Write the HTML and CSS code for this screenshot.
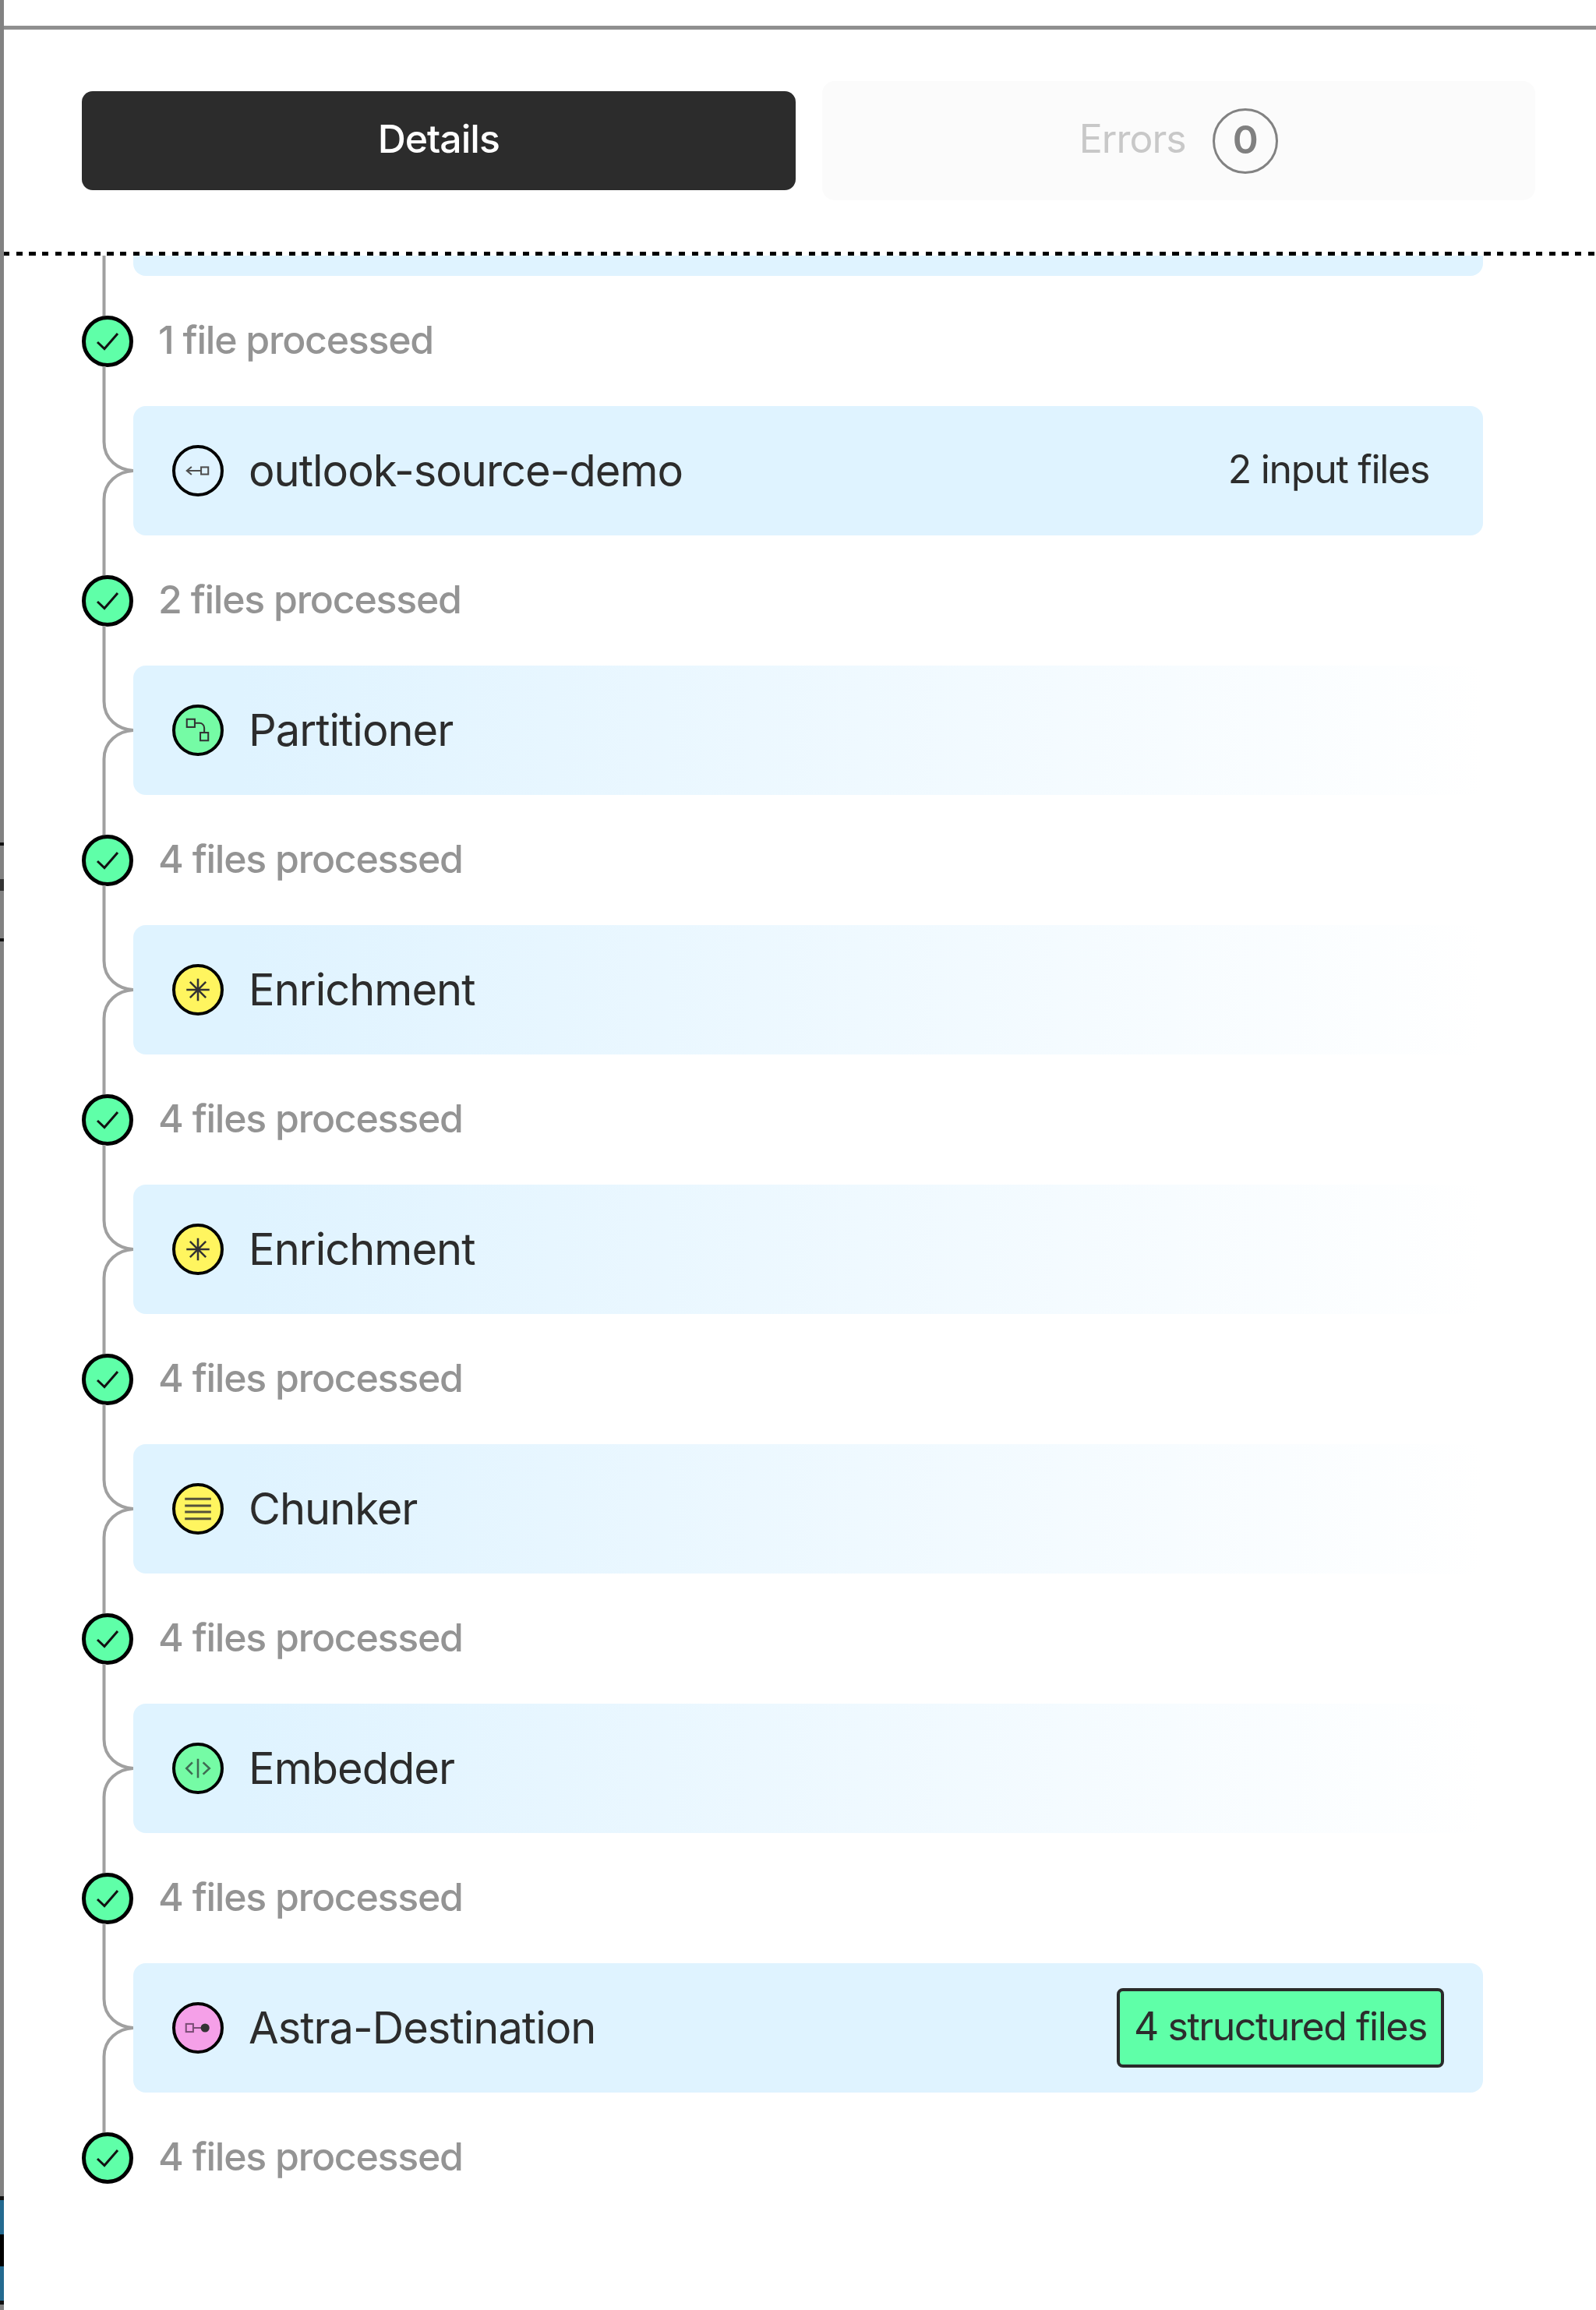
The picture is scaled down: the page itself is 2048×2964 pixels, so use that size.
FILE: index.html
```html
<!DOCTYPE html>
<html lang="en">
<head>
    <meta charset="UTF-8">
    <meta name="viewport" content="width=device-width, initial-scale=1.0">
    <title>Job Details</title>
    <link rel="stylesheet" href="styles.css">
</head>
<body>
    <div class="window-edge"></div>

    <svg class="defs" width="0" height="0">
        <symbol id="connector" viewBox="0 0 44 268">
            <path d="M6.5 0V97C6.5 120 25 133 44 134C25 135 6.5 148 6.5 171V268" fill="none" stroke="#a0a0a0" stroke-width="4"/>
        </symbol>
        <symbol id="check" viewBox="1 1 56 56">
            <path d="M16 30L25 38.5L42 19" fill="none" stroke="#111" stroke-width="3"/>
        </symbol>
    </svg>

    <header class="top-bar"></header>

    <div class="tabs">
        <div class="tab tab-active"><span class="tab-label">Details</span></div>
        <div class="tab tab-disabled">
            <span class="tab-label">Errors</span>
            <span class="count">0</span>
        </div>
    </div>

    <div class="divider"></div>

    <div class="timeline">
        <div class="card-row">
            <svg class="connector"><use href="#connector"/></svg>
            <div class="card card-solid"></div>
        </div>

        <div class="step">
            <span class="step-dot"><svg><use href="#check"/></svg></span>
            <span class="step-label">1 file processed</span>
        </div>

        <div class="card-row">
            <svg class="connector"><use href="#connector"/></svg>
            <div class="card card-solid">
                <span class="node-icon">
                    <svg viewBox="0.5 0.5 57 57" fill="none" stroke="#4d4d4d" stroke-width="2">
                        <path d="M15 29H33M21 24L15 29L21 34"/>
                        <rect x="33" y="24.5" width="9" height="9"/>
                    </svg>
                </span>
                <span class="card-name">outlook-source-demo</span>
                <span class="card-note">2 input files</span>
            </div>
        </div>

        <div class="step">
            <span class="step-dot"><svg><use href="#check"/></svg></span>
            <span class="step-label">2 files processed</span>
        </div>

        <div class="card-row">
            <svg class="connector"><use href="#connector"/></svg>
            <div class="card">
                <span class="node-icon icon-green">
                    <svg viewBox="0.5 0.5 57 57" fill="none" stroke="#333" stroke-width="2">
                        <rect x="15" y="15" width="10" height="10"/>
                        <rect x="32" y="32" width="10" height="10"/>
                        <path d="M25 20H31A6 6 0 0 1 37 26V32"/>
                    </svg>
                </span>
                <span class="card-name">Partitioner</span>
            </div>
        </div>

        <div class="step">
            <span class="step-dot"><svg><use href="#check"/></svg></span>
            <span class="step-label">4 files processed</span>
        </div>

        <div class="card-row">
            <svg class="connector"><use href="#connector"/></svg>
            <div class="card">
                <span class="node-icon icon-yellow">
                    <svg viewBox="0.5 0.5 57 57" fill="none" stroke="#333" stroke-width="2.5">
                        <path d="M14.5 29H43.5M29 15V43M19 19L39 39M39 19L19 39"/>
                    </svg>
                </span>
                <span class="card-name">Enrichment</span>
            </div>
        </div>

        <div class="step">
            <span class="step-dot"><svg><use href="#check"/></svg></span>
            <span class="step-label">4 files processed</span>
        </div>

        <div class="card-row">
            <svg class="connector"><use href="#connector"/></svg>
            <div class="card">
                <span class="node-icon icon-yellow">
                    <svg viewBox="0.5 0.5 57 57" fill="none" stroke="#333" stroke-width="2.5">
                        <path d="M14.5 29H43.5M29 15V43M19 19L39 39M39 19L19 39"/>
                    </svg>
                </span>
                <span class="card-name">Enrichment</span>
            </div>
        </div>

        <div class="step">
            <span class="step-dot"><svg><use href="#check"/></svg></span>
            <span class="step-label">4 files processed</span>
        </div>

        <div class="card-row">
            <svg class="connector"><use href="#connector"/></svg>
            <div class="card">
                <span class="node-icon icon-yellow">
                    <svg viewBox="0.5 0.5 57 57" fill="none" stroke="#55533a" stroke-width="3">
                        <path d="M12.5 16.5H45.5M12.5 25H45.5M12.5 33H45.5M12.5 41.5H45.5"/>
                    </svg>
                </span>
                <span class="card-name">Chunker</span>
            </div>
        </div>

        <div class="step">
            <span class="step-dot"><svg><use href="#check"/></svg></span>
            <span class="step-label">4 files processed</span>
        </div>

        <div class="card-row">
            <svg class="connector"><use href="#connector"/></svg>
            <div class="card">
                <span class="node-icon icon-green">
                    <svg viewBox="0.5 0.5 57 57" fill="none" stroke="#3f6b52" stroke-width="2.5">
                        <path d="M29 17V41M22 21.5L14.5 29L22 36.5M35.5 21.5L43.5 29L35.5 36.5"/>
                    </svg>
                </span>
                <span class="card-name">Embedder</span>
            </div>
        </div>

        <div class="step">
            <span class="step-dot"><svg><use href="#check"/></svg></span>
            <span class="step-label">4 files processed</span>
        </div>

        <div class="card-row">
            <svg class="connector"><use href="#connector"/></svg>
            <div class="card card-solid">
                <span class="node-icon icon-pink">
                    <svg viewBox="0.5 0.5 57 57" fill="none" stroke="#7a4d75" stroke-width="2">
                        <rect x="14" y="24" width="9" height="10"/>
                        <path d="M23 29H34"/>
                        <circle cx="38" cy="29" r="5.5" fill="#333" stroke="none"/>
                    </svg>
                </span>
                <span class="card-name">Astra-Destination</span>
                <span class="badge">4 structured files</span>
            </div>
        </div>

        <div class="step">
            <span class="step-dot"><svg><use href="#check"/></svg></span>
            <span class="step-label">4 files processed</span>
        </div>
    </div>
</body>
</html>
```

FILE: styles.css
```css
* {
    box-sizing: border-box;
}
body {
    position: relative;
    margin: 0;
    height: 2964px;
    overflow: hidden;
    background-color: #fff;
    color: #2c2c2c;
    font-family: Inter, "Liberation Sans", sans-serif;
}
.defs {
    position: absolute;
}

/* bit of the window behind, showing down the left side */
.window-edge {
    position: absolute;
    top: 0;
    left: 0;
    width: 5px;
    height: 100%;
    background: linear-gradient(to bottom,
        #828282 0, #828282 1081px,
        #111 1081px, #111 1085px,
        #828282 1085px, #828282 1128px,
        #333 1128px, #333 1143px,
        #828282 1143px, #828282 1204px,
        #111 1204px, #111 1208px,
        #828282 1208px, #828282 2818px,
        #111 2818px, #111 2823px,
        #246a90 2823px, #246a90 2867px,
        #000 2867px, #000 2908px,
        #246a90 2908px, #246a90 2952px,
        #111 2952px, #111 2957px,
        #828282 2957px);
}

.top-bar {
    height: 38px;
    border-bottom: 5px solid #8f8f8f;
}

.tabs {
    display: flex;
    align-items: center;
    gap: 34px;
    height: 285px;
    padding: 0 78px 0 105px;
}
.tab {
    display: flex;
    flex: 1;
    align-items: center;
    justify-content: center;
    gap: 34px;
    font-size: 50px;
    letter-spacing: -1px;
}
.tab-label {
    padding-bottom: 5px;
}
.tab-active {
    height: 127px;
    border-radius: 14px;
    background-color: #2c2c2c;
    color: #fff;
    font-weight: 500;
}
.tab-disabled {
    height: 153px;
    border-radius: 16px;
    background-color: #fbfbfb;
    color: #c8c8c8;
}
.count {
    display: flex;
    align-items: center;
    justify-content: center;
    width: 84px;
    height: 84px;
    padding-bottom: 4px;
    border: 3px solid #828282;
    border-radius: 50%;
    color: #808080;
    font-weight: 600;
}

.divider {
    height: 5px;
    margin-left: 4px;
    background: repeating-linear-gradient(90deg, #000 0, #000 8.3px, transparent 8.3px, transparent 16.67px);
}

.timeline {
    display: flex;
    flex-direction: column;
    gap: 50.5px;
    height: 2636px;
    overflow: hidden;
    padding: 0 145px 0 105px;
}
/* the list is scrolled, only the bottom of the first card is left */
.timeline > :first-child {
    margin-top: -140px;
}

.step {
    display: flex;
    flex: none;
    align-items: center;
    gap: 32px;
    height: 66px;
    color: #949494;
    font-size: 50px;
    font-weight: 500;
    letter-spacing: -1.25px;
}
.step-label {
    padding-bottom: 4px;
}
.step-dot {
    position: relative;
    flex: none;
    width: 66px;
    height: 66px;
    border: 5px solid #000;
    border-radius: 50%;
    background-color: #5fffa8;
}
.step-dot svg {
    display: block;
    width: 56px;
    height: 56px;
}

.card-row {
    position: relative;
    flex: none;
    height: 166px;
    margin-left: 66px;
}
.connector {
    position: absolute;
    top: -51px;
    left: -44px;
    width: 44px;
    height: 268px;
}
.card {
    display: flex;
    align-items: center;
    height: 100%;
    padding: 0 50px;
    border-radius: 16px;
    background: linear-gradient(90deg, #dff3ff 8%, #fff 100%);
}
.card-solid {
    background: #dff3ff;
}
.node-icon {
    flex: none;
    width: 66px;
    height: 66px;
    margin-right: 32px;
    border: 4.5px solid #000;
    border-radius: 50%;
}
.node-icon svg {
    display: block;
}
.icon-green {
    background-color: #75fba5;
}
.icon-yellow {
    background-color: #fff55f;
}
.icon-pink {
    background-color: #f5a0e8;
}
.card-name {
    flex: 1;
    font-size: 56px;
    letter-spacing: -1px;
}
.card-note {
    margin-right: 19px;
    padding-bottom: 4px;
    font-size: 50px;
    letter-spacing: -1.3px;
}
.badge {
    height: 102px;
    padding: 0 18px;
    border: 4px solid #2a2a2a;
    border-radius: 8px;
    background-color: #5fffa8;
    font-size: 50px;
    line-height: 90px;
    letter-spacing: -1.45px;
}
```
